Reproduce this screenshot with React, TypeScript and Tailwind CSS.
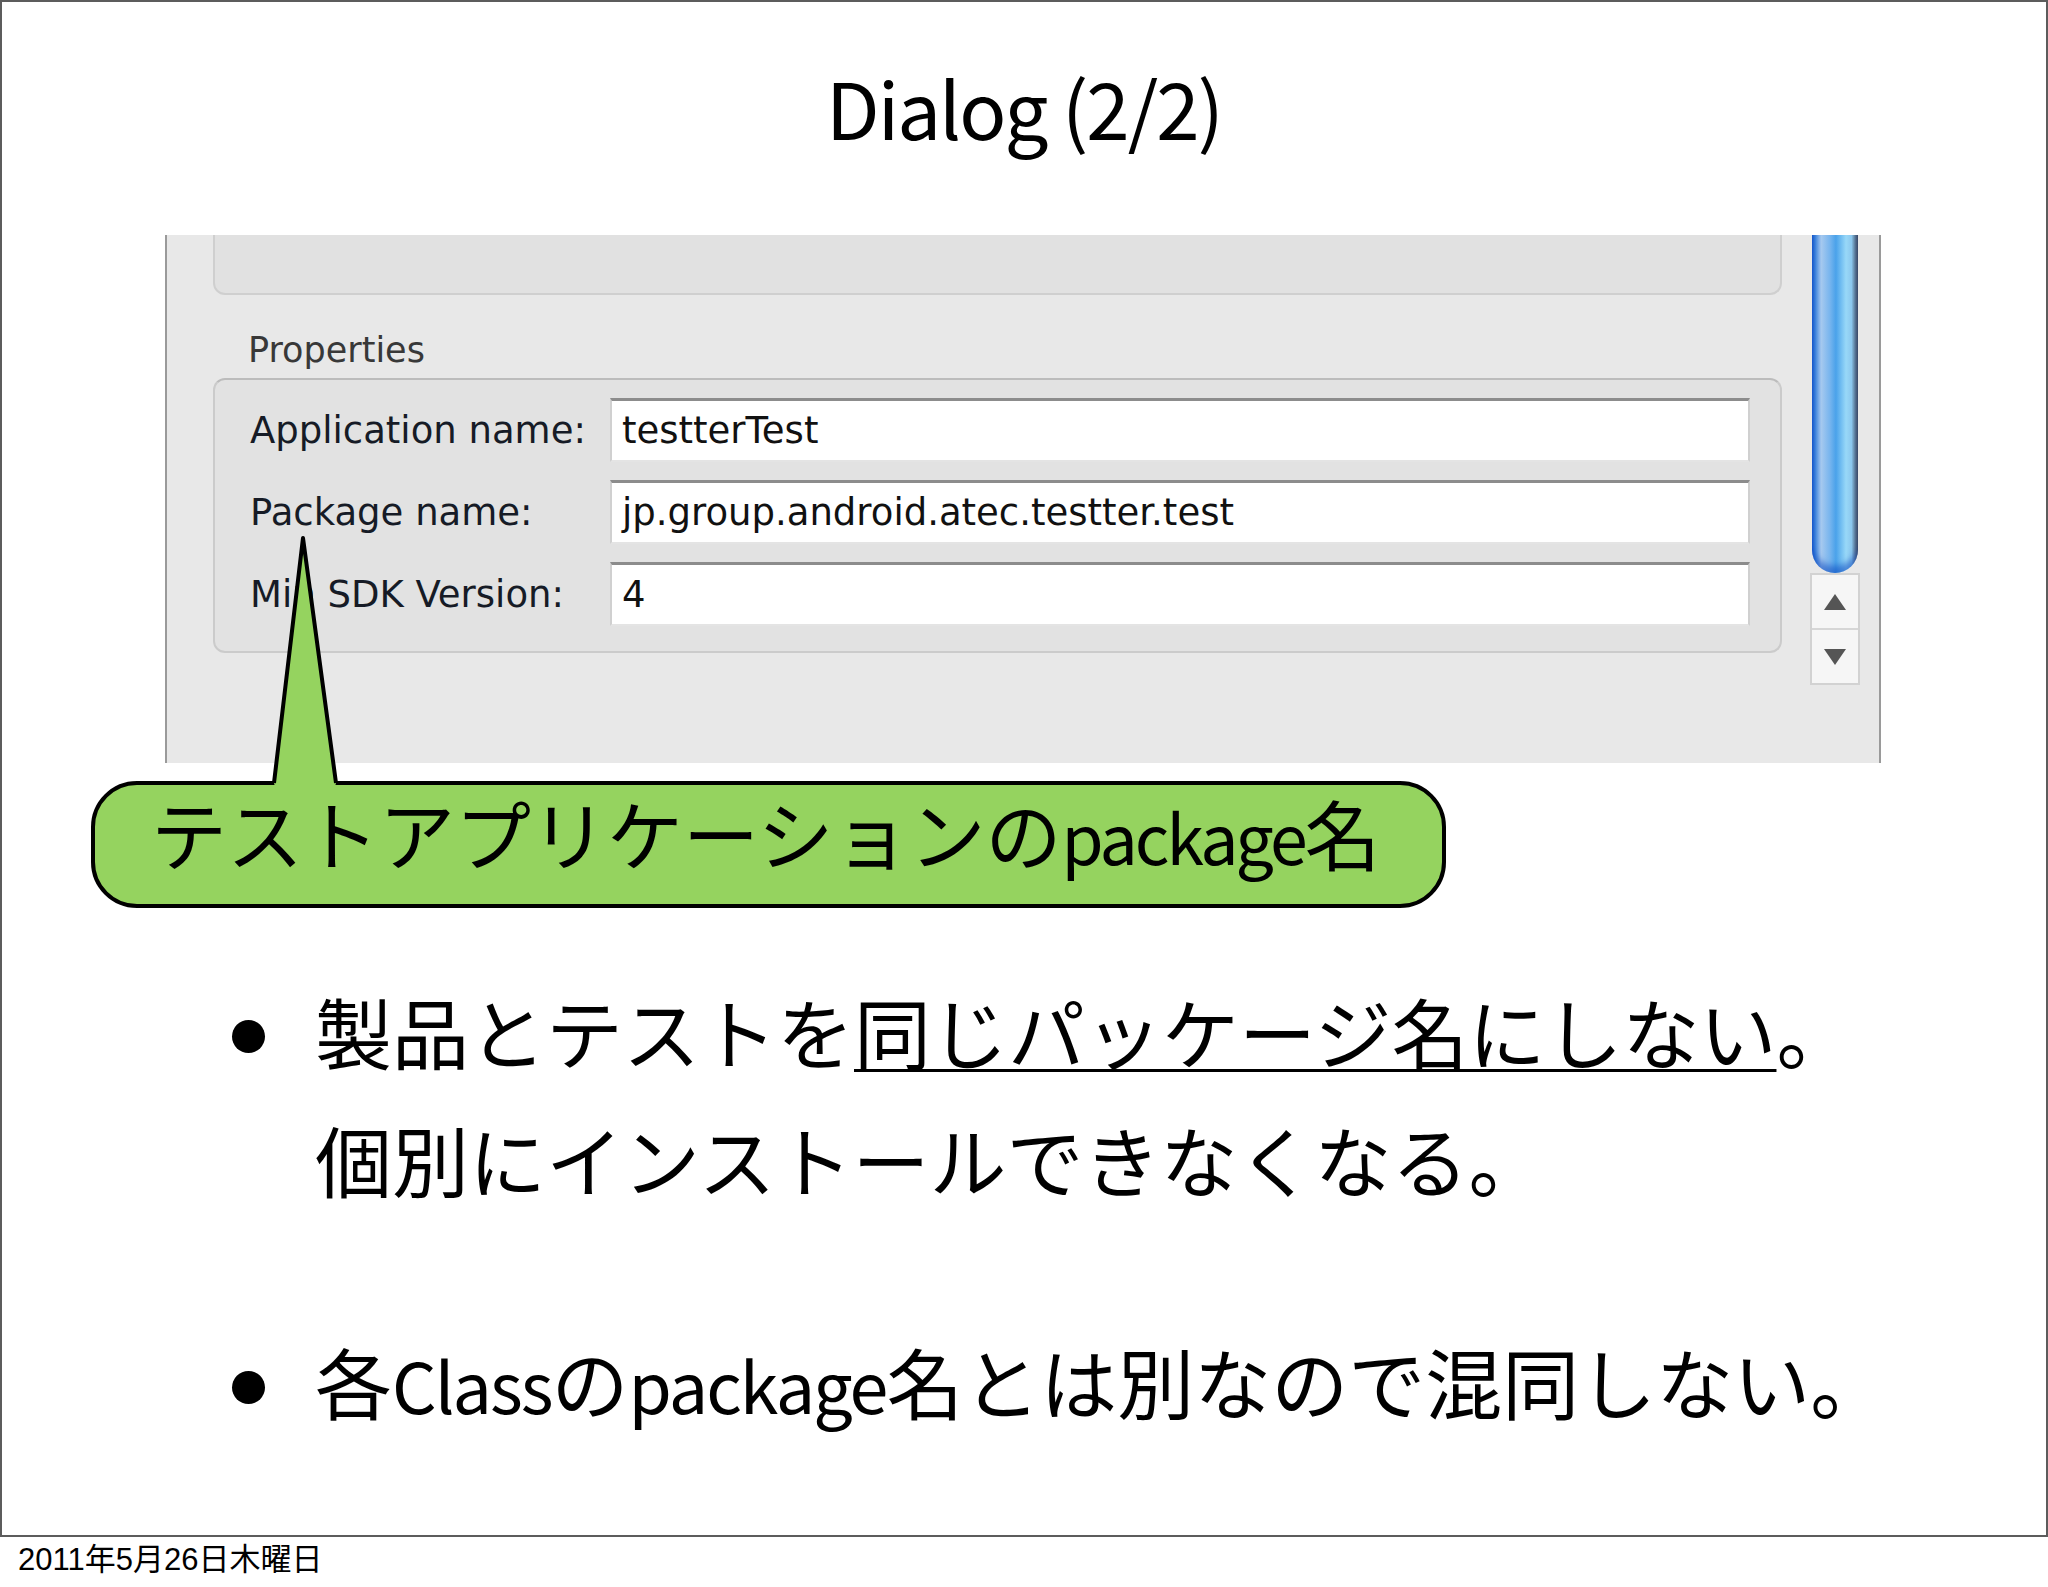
const FIELDS = [
  { label: 'Application name:', value: 'testterTest' },
  { label: 'Package name:', value: 'jp.group.android.atec.testter.test' },
  { label: 'Min SDK Version:', value: '4' },
]

function ScrollBar() {
  return (
    <div className="ml-[28px] w-[50px] flex flex-col">
      {/* aqua thumb */}
      <div className="mx-[2px] h-[338px] rounded-b-[23px] bg-[linear-gradient(to_right,#1b5ccf_0%,#3f86de_7%,#a6c9ef_20%,#7ab6ee_38%,#4aa2ea_52%,#98d8f8_74%,#8cc8ee_86%,#5b7286_95%,#4a4a4a_100%)] shadow-[inset_0_-7px_6px_rgba(10,70,190,0.55)]" />
      <div className="h-[112px] border-2 border-[#d2d2d2] bg-[#f6f6f6] flex flex-col">
        <div className="flex-1 flex items-center justify-center border-b-2 border-[#d6d6d6]">
          <svg width="22" height="16" viewBox="0 0 22 16">
            <polygon points="11,0 22,16 0,16" fill="#555" />
          </svg>
        </div>
        <div className="flex-1 flex items-center justify-center">
          <svg width="22" height="16" viewBox="0 0 22 16">
            <polygon points="0,0 22,0 11,16" fill="#555" />
          </svg>
        </div>
      </div>
    </div>
  )
}

export default function App() {
  return (
    <div className="w-[2048px] h-[1587px] bg-white text-black">
      <div className="h-[1537px] border-2 border-[#5c5c5c] flex flex-col font-['Noto_Sans_CJK_JP',sans-serif]">
        <h1 className="mt-[65px] text-center text-[78px] leading-none tracking-[-2px]">Dialog (2/2)</h1>

        {/* wizard screenshot */}
        <div className="mt-[90px] ml-[163px] w-[1716px] h-[528px] shrink-0 flex bg-[#e8e8e8] border-x-2 border-[#9a9a9a] font-['DejaVu_Sans',sans-serif] overflow-hidden">
          <div className="ml-[46px] w-[1569px] flex flex-col">
            <div className="h-[60px] bg-[#e1e1e1] border-x-2 border-b-2 border-[#cfcfcf] rounded-b-[12px]" />
            <p className="mt-[38px] ml-[35px] text-[35px] leading-none text-[#383838]">Properties</p>
            <div className="mt-[10px] h-[275px] bg-[#e2e2e2] border-2 border-[#cbcbcb] border-t-[#bcbcbc] rounded-[12px] pt-[18px] pl-[35px] pr-[30px] flex flex-col gap-[18px]">
              {FIELDS.map(f => (
                <div key={f.label} className="flex items-center h-[64px]">
                  <span className="w-[360px] text-[37px] leading-none text-[#161b26]">{f.label}</span>
                  <div className="flex-1 h-full bg-white border-t-[3px] border-t-[#8c8c8c] border-x-2 border-x-[#d0d0d0] border-b-2 border-b-[#e4e4e4] pl-[10px] flex items-center text-[37px] leading-none text-[#111]">
                    {f.value}
                  </div>
                </div>
              ))}
            </div>
          </div>
          <ScrollBar />
        </div>

        {/* callout */}
        <div className="relative mt-[18px] ml-[89px] w-[1355px] h-[127px] shrink-0 rounded-[46px] border-4 border-black bg-[#95d35f] pl-[56px] pt-[9px] text-[76px] leading-none whitespace-nowrap">
          テストアプリケーションの<span className="text-[68px] tracking-[-3px]">package</span>名
          <svg className="absolute left-[173px] top-[-251px]" width="74" height="256" viewBox="0 0 74 256">
            <polygon points="6,249 35,4 68,249 66,256 8,256" fill="#95d35f" />
            <polyline points="6,249 35,4 68,249" fill="none" stroke="#000" strokeWidth="4" strokeLinejoin="round" />
          </svg>
        </div>

        {/* bullets */}
        <div className="mt-[59px] ml-[230px] text-[77px] leading-[128px] whitespace-nowrap">
          <div className="flex">
            <span className="mt-[53px] w-[33px] h-[33px] rounded-full bg-black shrink-0" />
            <div className="ml-[50px]">
              <div>
                製品とテストを<span className="underline decoration-[3px] underline-offset-[5px]">同じパッケージ名にしない</span>。
              </div>
              <div>個別にインストールできなくなる。</div>
            </div>
          </div>
          <div className="flex mt-[94px]">
            <span className="mt-[54px] w-[33px] h-[33px] rounded-full bg-black shrink-0" />
            <div className="ml-[50px]">
              各<span className="text-[70px] tracking-[-2px]">Class</span>の<span className="text-[70px] tracking-[-2px]">package</span>名とは別なので混同しない。
            </div>
          </div>
        </div>
      </div>

      <p className="pl-[18px] pt-[7px] text-[31px] leading-[31px] font-['Liberation_Sans','Noto_Sans_CJK_JP',sans-serif]">
        2011年5月26日木曜日
      </p>
    </div>
  )
}
